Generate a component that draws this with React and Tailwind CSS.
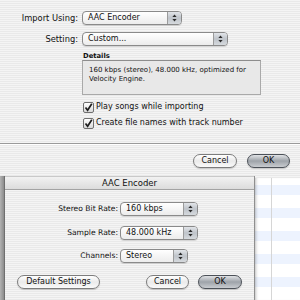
import React from 'react';

const stripes = 'bg-[repeating-linear-gradient(180deg,#f4f4f4_0px,#f4f4f4_1px,#e9e9e9_1px,#e9e9e9_2px)]';

function Arrows() {
  return (
    <svg width="5" height="8" viewBox="0 0 5 8">
      <path d="M2.5 0.5 L4.6 3 L0.4 3 Z" fill="#2b2b2b" />
      <path d="M2.5 7.5 L4.6 5 L0.4 5 Z" fill="#2b2b2b" />
    </svg>
  );
}

function Popup({ className, children }) {
  return (
    <div className={`flex h-[14px] rounded-[4px] border border-[#8a8a8a] bg-gradient-to-b from-white to-[#ececec] shadow-[0_1px_0_rgba(0,0,0,0.12)] ${className}`}>
      <div className="flex-1 pl-[5px] leading-[12px] text-[#111]">{children}</div>
      <div className="flex w-[14px] items-center justify-center rounded-r-[3px] border-l border-[#9b9b9b] bg-gradient-to-b from-[#e2e5e9] via-[#bfc4ca] to-[#d6dade]">
        <Arrows />
      </div>
    </div>
  );
}

function Button({ className, primary, children }) {
  const look = primary
    ? 'border-[#4c5158] bg-gradient-to-b from-[#e1e3e6] via-[#9ea3a9] to-[#c9ccd0]'
    : 'border-[#7c7c7c] bg-gradient-to-b from-white via-[#eaeaea] to-[#fafafa]';
  return (
    <div className={`flex h-[14px] items-center justify-center rounded-full border text-[8px] leading-none text-[#111] shadow-[0_1px_1px_rgba(0,0,0,0.18)] ${look} ${className}`}>
      {children}
    </div>
  );
}

function Check({ children }) {
  return (
    <div className="flex h-[12px] items-center pl-[83px]">
      <div className="flex h-[11px] w-[11px] items-center justify-center rounded-[2px] border border-[#6f6f6f] bg-gradient-to-b from-white to-[#d9d9d9]">
        <svg width="9" height="9" viewBox="0 0 9 9">
          <path d="M1.5 4.5 L3.6 7.2 L7.8 0.8" fill="none" stroke="#1e1e1e" strokeWidth="1.7" />
        </svg>
      </div>
      <span className="ml-[2px] text-[#111]">{children}</span>
    </div>
  );
}

export default function App() {
  return (
    <div className="h-[300px] w-[300px] overflow-hidden font-['DejaVu_Sans',sans-serif] text-[8px]">
      {/* Import preferences */}
      <div className={`flex h-[176px] flex-col pt-[11px] ${stripes}`}>
        <div className="flex h-[14px] items-center">
          <span className="w-[78px] text-right text-[8.3px] text-[#111]">Import Using:</span>
          <Popup className="ml-[4px] w-[100px]">AAC Encoder</Popup>
        </div>
        <div className="mt-[7px] flex h-[14px] items-center">
          <span className="w-[78px] text-right text-[8.3px] text-[#111]">Setting:</span>
          <Popup className="ml-[4px] w-[146px]">Custom...</Popup>
        </div>
        <div className="mt-[6px] h-[8px] pl-[83px] text-[6.8px] font-bold leading-[8px] text-[#111]">Details</div>
        <div className="ml-[82px] h-[35px] w-[179px] border border-[#a9a9a9] border-t-[#8d8d8d] bg-[#e8e8e8] pl-[6px] pt-[5px] text-[7px] leading-[9px] text-[#111]">
          <div>160 kbps (stereo), 48.000 kHz, optimized for</div>
          <div>Velocity Engine.</div>
        </div>
        <div className="mt-[6px]">
          <Check>Play songs while importing</Check>
        </div>
        <div className="mt-[4px]">
          <Check>Create file names with track number</Check>
        </div>
        <div className="mt-[14px] h-px bg-[#9a9a9a]" />
        <div className="h-px bg-white" />
        <div className="mt-[9px] flex justify-end gap-[10px] pr-[10px]">
          <Button className="w-[44px]">Cancel</Button>
          <Button className="w-[43px]" primary>OK</Button>
        </div>
      </div>

      {/* AAC Encoder sheet over the song list */}
      <div className="flex h-[124px]">
        <div className="w-[5px] border-r border-[#6f6f6f] bg-gradient-to-r from-[#b3b3b3] to-[#8c8c8c]" />
        <div className={`flex w-[250px] flex-col border-r border-[#8f8f8f] ${stripes}`}>
          <div className="flex h-[14px] items-center justify-center border-b border-[#a3a3a3] border-t border-t-[#c9c9c9] bg-gradient-to-b from-[#f2f2f2] to-[#dcdcdc] text-[8.5px] text-[#111]">
            AAC Encoder
          </div>
          <div className="mt-[12px] flex h-[14px] items-center">
            <span className="w-[113px] text-right text-[7.6px] text-[#111]">Stereo Bit Rate:</span>
            <Popup className="ml-[2px] w-[78px]">160 kbps</Popup>
          </div>
          <div className="mt-[10px] flex h-[14px] items-center">
            <span className="w-[113px] text-right text-[7.6px] text-[#111]">Sample Rate:</span>
            <Popup className="ml-[2px] w-[78px]">48.000 kHz</Popup>
          </div>
          <div className="mt-[9px] flex h-[14px] items-center">
            <span className="w-[113px] text-right text-[7.6px] text-[#111]">Channels:</span>
            <Popup className="ml-[2px] w-[68px]">Stereo</Popup>
          </div>
          <div className="mt-[12px] flex items-center px-[12px]">
            <Button className="w-[83px]">Default Settings</Button>
            <div className="flex-1" />
            <Button className="w-[43px]">Cancel</Button>
            <Button className="ml-[9px] w-[44px]" primary>OK</Button>
          </div>
        </div>
        <div className="flex flex-1 flex-col">
          <div className={`h-[2px] ${stripes}`} />
          <div className="flex flex-1 bg-[repeating-linear-gradient(180deg,#ffffff_0px,#ffffff_7px,#edf3fe_7px,#edf3fe_17px,#ffffff_17px,#ffffff_23px)] shadow-[inset_3px_0_3px_-2px_rgba(0,0,0,0.25)]">
            <div className="w-[17px] border-r border-[#d6d6d6]" />
          </div>
        </div>
      </div>
    </div>
  );
}
